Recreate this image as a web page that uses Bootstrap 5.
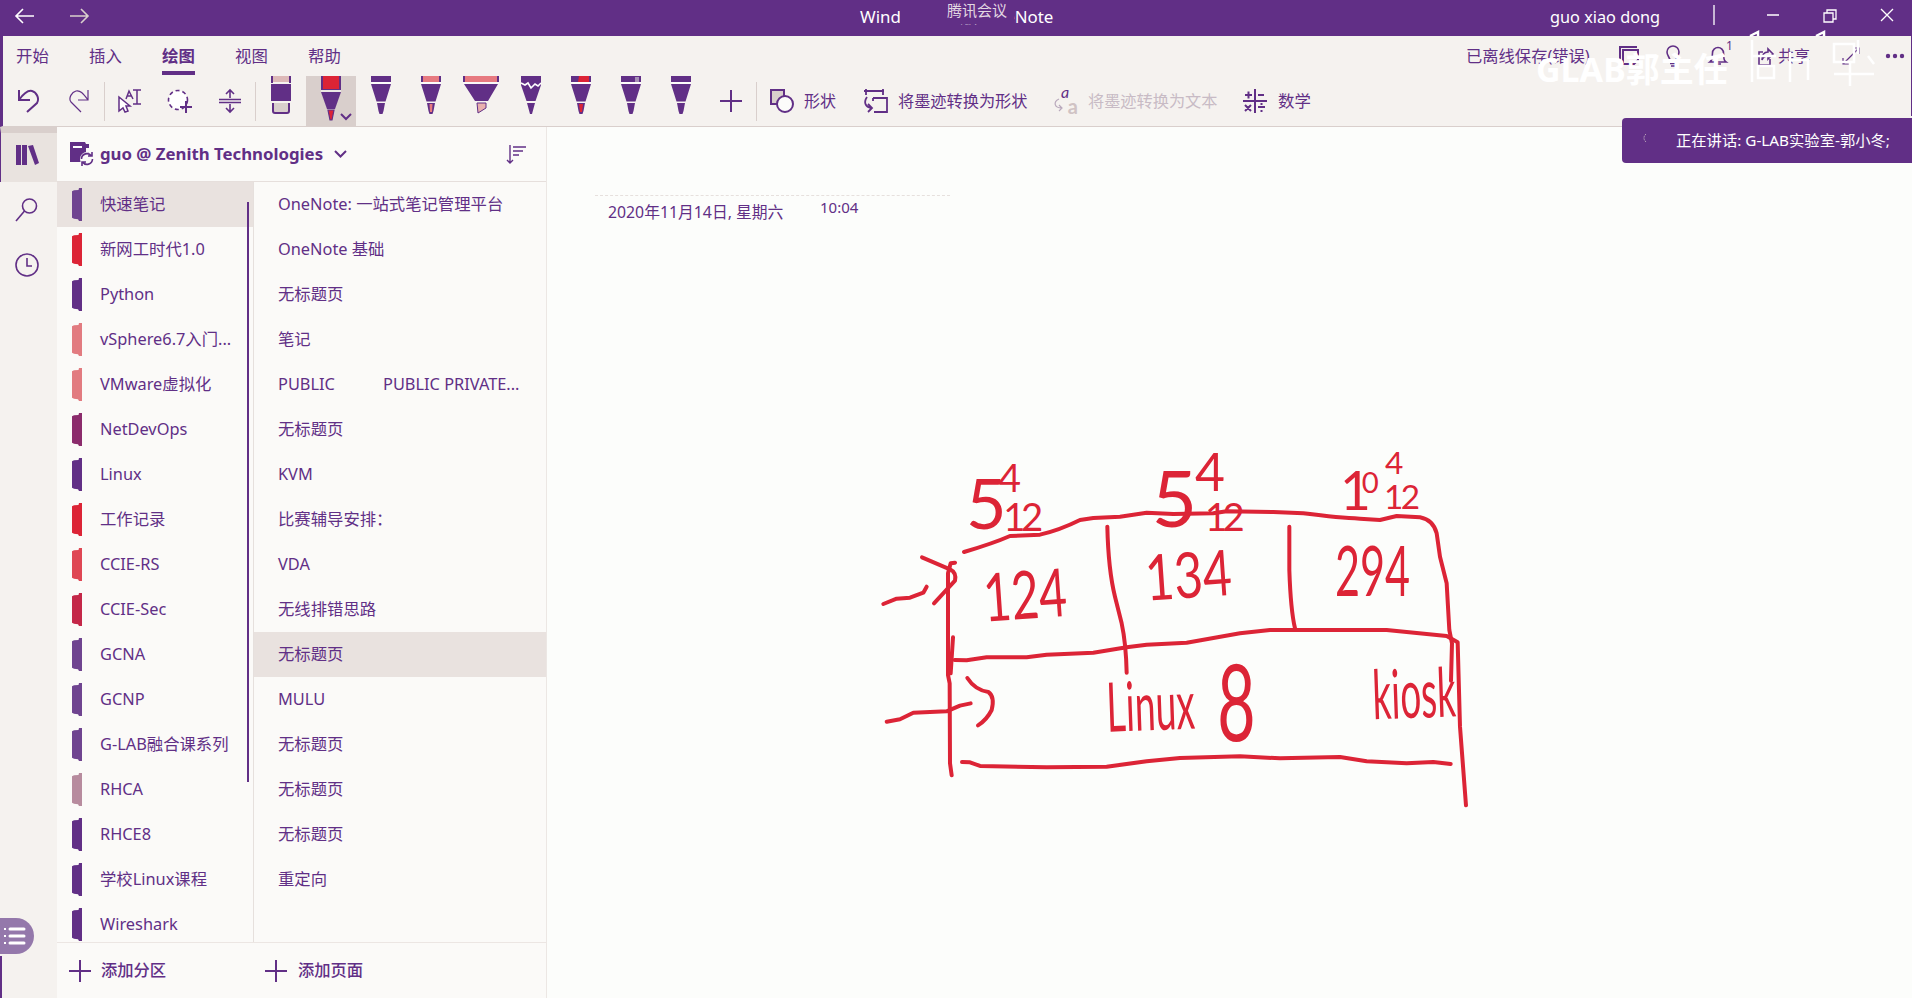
<!DOCTYPE html>
<html lang="zh-CN">
<head>
<meta charset="utf-8">
<title>OneNote</title>
<link href="https://cdn.jsdelivr.net/npm/bootstrap@5.3.0/dist/css/bootstrap.min.css" rel="stylesheet">
<script src="https://cdn.jsdelivr.net/npm/bootstrap@5.3.0/dist/js/bootstrap.bundle.min.js"></script>
<style>
:root{--pp:#612f86;--rd:#dc2436;--tan:#d9cfcc;--paper:#fcfdfb;--ribbon:#f5f2ef}
body{width:1912px;height:998px;overflow:hidden;background:var(--paper);color:var(--pp);font:16px/1 "Noto Sans","Noto Sans CJK SC",sans-serif}
svg{display:block;overflow:visible;flex:none}
.ln{fill:none;stroke:currentColor;stroke-width:1.6}
.fillp{fill:var(--pp)}
.titlebar{height:36px;background:var(--pp);color:#fff;padding-bottom:4px}
.ribbon{height:91px;background:var(--ribbon);border-bottom:1px solid var(--tan);border-left:3px solid var(--pp)}
.tabs{height:40px;padding-left:13px}
.tabs a{color:inherit;text-decoration:none;width:73px;padding-top:12px;height:39px;font-size:16.400px}
.tabs a.on{font-weight:700}
.tabs a.on span{display:inline-block;border-bottom:4px solid var(--pp);height:27px}
.tabs a span{display:block}
.tools{height:50px;padding-left:1px}
.tool{width:50px;height:50px;display:flex;align-items:center;justify-content:center;flex:none}
.pen{align-items:flex-start}
.tool.on{background:var(--tan)}
.vr1{width:1px;height:39px;background:var(--tan);align-self:center;margin-right:0}
.cmd{height:50px;display:flex;align-items:center}
.rail{width:57px;background:var(--ribbon)}
.rail .cell{height:55px;display:flex;align-items:center;justify-content:center;padding-right:3px}
.rail .books{background:#e9e3df;border-left:1px solid var(--pp);border-top:6px solid var(--tan);padding-bottom:4px}
.side{width:490px;min-height:0;background:#fbfaf8;border-right:1px solid #ece7e4}
.sidehead{height:55px;flex:none;border-bottom:1px solid #e6dfdc}
.lists{min-height:0;overflow:hidden;font-size:16.350px}
.sections{width:197px;border-right:1px solid #e6e0dd}
.row45{height:45px;display:flex;align-items:center;white-space:nowrap;padding-bottom:0}
.sections .row45{padding-left:15px}
.sections .row45::before{content:"";width:10px;height:33px;margin-right:18px;background:var(--c,var(--pp));clip-path:polygon(0 10%,20% 7%,65% 6%,70% 0,100% 0,100% 100%,70% 100%,60% 95%,20% 93%,0 90%)}
.pages .row45{padding-left:24px}
.sel{background:#e9e2df}
.foot{height:56px;flex:none;border-top:1px solid #ece6e3;font-weight:500;font-size:16.300px}
.bar{position:absolute;left:247px;top:202px;width:2px;height:580px;background:var(--pp)}
.toast0{position:absolute;left:1622px;top:118px;width:290px;height:45px;background:var(--pp);color:#fff;border-radius:4px 0 0 4px;font-size:15.3px}
.wm{position:absolute;left:1536px;top:52px;color:#fff;font-weight:700;font-size:34px;white-space:nowrap;line-height:34px}
.mask{position:absolute;left:40px;top:-10px;width:114px;height:25px;background:var(--pp);color:#e3d8e2;padding-left:47px;font-size:15px;line-height:22px}
.bubble{position:absolute;left:0;top:918px;width:34px;height:36px;border-radius:0 18px 18px 0;background:#9478ab}
.edge{position:absolute;background:var(--pp)}
.ink{position:absolute;left:0;top:0;pointer-events:none}
.ink path{fill:none;stroke:var(--rd);stroke-width:12;stroke-linecap:round;stroke-linejoin:round}
.ink text{fill:var(--rd);font-family:"Lato","Open Sans",sans-serif;font-weight:400}
.small1{position:absolute;font-size:12px}
</style>
</head>
<body class="position-relative d-flex flex-column">
<svg width="0" height="0" class="position-absolute"><defs>
<g id="pen"><path class="fillp" d="M0 0h20v6H0zM0 8h20l-5.500 17.500h-9zM6 27h8l-1.500 8 -1 3h-3l-1-3z"/><path d="M0 7h20" stroke="#fff" stroke-width="1.500"/></g>
</defs></svg>

<header class="titlebar d-flex align-items-center flex-shrink-0">
  <svg width="100" height="20" class="ln"><path d="M34 10H16M23 3l-7 7 7 7"/><path d="M70 10h18M81 3l7 7-7 7" stroke="#d9cfcc"/></svg>
  <div class="position-relative" style="margin-left:760px;width:193px;white-space:nowrap;font-size:16.900px;top:1px"><span>Windows 10 版 OneNote</span><div class="mask">腾讯会议</div></div>
  <div style="margin-left:497px;width:112px;white-space:nowrap;padding-top:2px;font-size:16.300px">guo xiao dong</div>
  <svg width="200" height="24" class="ln" style="margin-left:53px;stroke-width:1.300"><path d="M1 1v20M54 11h12M111 9h9v9h-9zM114 9V6h9v9h-3M168 5l12 12M180 5l-12 12"/></svg>
</header>

<div class="ribbon flex-shrink-0">
  <div class="tabs d-flex">
    <a href="#"><span>开始</span></a><a href="#"><span>插入</span></a><a href="#" class="on"><span>绘图</span></a><a href="#"><span>视图</span></a><a href="#"><span>帮助</span></a>
    <div class="d-flex ms-auto align-items-center" style="width:446px;height:40px">
      <span style="width:153px;white-space:nowrap;font-size:16.300px">已离线保存(错误)</span>
      <svg width="20" height="20" class="ln" style="stroke-width:2"><path d="M1 15V1h17M4 4h15v10l-4 4H4z"/></svg>
      <svg width="14" height="20" class="ln" style="margin-left:27px"><path d="M4 15c0-4-3-5-3-9a6 6 0 0 1 12 0c0 4-3 5-3 9zM4 17.500h6M5 20h4"/></svg>
      <svg width="22" height="22" class="ln" style="margin-left:29px"><path d="M1 17c3-2 2-5 2.500-9a5.500 5.500 0 0 1 11 0C15 12 14 15 17 17zM6 19h6"/></svg><span class="small1" style="left:1726px;top:40px">1</span>
      <svg width="16" height="20" class="ln" style="margin-left:27px"><path d="M5 6H1v13h11v-6M4 14c0-6 3-8 6-8V3l5 5-5 5v-3c-3 0-5 1-6 4z"/></svg>
      <span style="margin-left:4px;width:64px">共享</span>
      <svg width="18" height="18" class="ln" style="stroke-width:1.200"><path d="M1 17L17 1M11 1h6v6M1 11v6h6"/></svg>
      <svg width="20" height="6" style="margin-left:25px"><g class="fillp"><circle cx="3" cy="3" r="2.200"/><circle cx="10" cy="3" r="2.200"/><circle cx="17" cy="3" r="2.200"/></g></svg>
    </div>
  </div>
  <div class="tools d-flex">
    <div class="tool"><svg width="22" height="24" class="ln" style="stroke-width:2"><path d="M1 1v10h11M1 11C6 4 10 1 14 2s8 7 5 12L9 23"/></svg></div>
    <div class="tool"><svg width="20" height="24" class="ln" style="stroke-width:1.200"><path d="M19 1v10H9M19 11C14 4 11 1 7 2S-1 9 2 13l10 10"/></svg></div>
    <div class="vr1"></div>
    <div class="tool"><svg width="24" height="24" class="ln" style="stroke-width:1.500"><path d="M15 1h8M19 1v14M15 15h8M8 10l3-8 4 8M9 7h5"/><path d="M1 8v14l4-3 2 4 3-1-2-5h4z" fill="#fff"/></svg></div>
    <div class="tool"><svg width="24" height="24" class="ln" style="stroke-width:1.600"><circle cx="10" cy="11" r="9.500" fill="#fff" stroke-dasharray="4 3"/><path d="M18 12v12M12 18h12" stroke-width="2"/></svg></div>
    <div class="tool"><svg width="22" height="24" class="ln"><path d="M0 10.500h22M0 13.500h22M11 9V1M7 5l4-4 4 4M11 15v8M7 19l4 4 4-4"/></svg></div>
    <div class="vr1"></div>
    <div class="tool pen"><svg width="20" height="38"><path d="M1 0v7M19 0v7" stroke="#612f86" stroke-width="2"/><path d="M2 0h16v6H2z" fill="#ddb9b8"/><path class="fillp" d="M0 8h20v17H0z"/><path d="M2 27v8q0 2 2 2h12q2 0 2-2v-8" fill="#d9cfcc" stroke="#612f86" stroke-width="2"/></svg></div>
    <div class="tool pen on"><svg width="20" height="46"><path d="M0 0h20v14H0z" fill="#612f86"/><path d="M2 0h16v13H2z" fill="#dc2436"/><path class="fillp" d="M0 16h20l-6 17H6z"/><path d="M7 34h6l-2 10H9z" fill="#dc2436" stroke="#612f86" stroke-width="1.200"/><path d="M0 15h20" stroke="#fff"/><path d="M20 38l5 5 5-5" class="ln" style="stroke-width:2"/></svg></div>
    <div class="tool pen"><svg width="20" height="38"><use href="#pen"/></svg></div>
    <div class="tool pen"><svg width="20" height="38"><use href="#pen"/><path d="M2 0h16v6H2zM8.500 28h3l-.5 8H9z" fill="#e77a80"/></svg></div>
    <div class="tool pen"><svg width="36" height="38"><path class="fillp" d="M0 0h36v6H0zM1 8h34L25 25H12z"/><path d="M2 0h32v6H2z" fill="#e77a80"/><path d="M0 7h36" stroke="#fff"/><path d="M14 27h9v5l-8 5z" fill="#e9b0ae" stroke="#612f86"/></svg></div>
    <div class="tool pen"><svg width="20" height="38"><path class="fillp" d="M0 0h20v9L14.500 25h-9L0 9zM6 27h8l-3 11h-2z"/><path d="M0 7l4 2 3-2 3 5 4-4 3 2 3-3" fill="none" stroke="#fff" stroke-width="1.600"/></svg></div>
    <div class="tool pen"><svg width="20" height="38"><use href="#pen"/><path d="M8 0h10v6H7zM8 28h4l-1 8H9z" fill="#dc2436"/></svg></div>
    <div class="tool pen"><svg width="20" height="38"><use href="#pen"/><path d="M14 1h4v5h-4z" fill="#a68fb5"/></svg></div>
    <div class="tool pen"><svg width="20" height="38"><use href="#pen"/></svg></div>
    <div class="tool"><svg width="22" height="22" class="ln" style="stroke-width:2"><path d="M11 0v22M0 11h22"/></svg></div>
    <div class="vr1"></div>
    <div class="cmd">
      <svg width="23" height="24" class="ln" style="margin-left:13px;stroke-width:2"><path d="M1 1h13v14H1z" fill="#d9cfcc"/><circle cx="15" cy="15" r="8" fill="#fcfcfa"/></svg><span style="margin-left:11px;width:60px">形状</span>
      <svg width="24" height="24" class="ln" style="stroke-width:2"><path d="M2 0v6M19 0v6M0 2h20M9 9h14v14H10M9 9v3M3 8c-4 6-1 10 4 11M4 15l4 4-4 4" stroke-width="1.800"/></svg><span style="margin-left:10px;width:156px;font-size:16.200px">将墨迹转换为形状</span>
      <div class="position-relative" style="width:25px;height:26px;color:#b9a9bc;font-family:Lato"><i class="position-absolute" style="left:7px;top:-4px;color:#612f86;font-size:16px">a</i><b class="position-absolute" style="right:1px;top:8px;color:#d0c3c4;font-size:20px">a</b><svg class="ln position-absolute" width="12" height="14" style="top:10px"><path d="M5 1C-1 4 0 10 8 10M5 7l3 3-3 3" stroke-width="1.200"/></svg></div><span style="margin-left:9px;width:155px;color:#c8bbc5;font-size:16.200px">将墨迹转换为文本</span>
      <svg width="24" height="24" class="ln" style="stroke-width:2"><path d="M12 0v24M0 12h24M2 6h7M5.500 2.500v7M15 6h6M2 16l6 6M8 16l-6 6M15 18h7M18.500 14v2M18.500 21v2"/></svg><span style="margin-left:11px;font-size:16.400px">数学</span>
    </div>
  </div>
</div>

<div class="d-flex flex-grow-1" style="min-height:0">
  <nav class="rail">
    <div class="cell books"><svg width="24" height="21"><path class="fillp" d="M0 0h5v20H0zM6 0h5v20H6zM12 1l5-1 6 18-4 2z"/></svg></div>
    <div class="cell"><svg width="22" height="24" class="ln"><circle cx="13.500" cy="8" r="7"/><path d="M8.500 13L0 23"/></svg></div>
    <div class="cell"><svg width="24" height="24" class="ln"><circle cx="12" cy="12" r="11"/><path d="M12 5v8h5"/></svg></div>
  </nav>
  <aside class="side d-flex flex-column">
    <div class="sidehead d-flex align-items-center">
      <svg width="23" height="24" style="margin-left:13px"><path class="fillp" d="M0 0h15l1 2h3v4h-3v4h3v3l-8 1v6H0z"/><path d="M3 5h9" stroke="#fff" stroke-width="2"/><circle cx="17" cy="17" r="7" fill="#fbfaf8"/><path d="M11.500 17a5.500 5.500 0 0 1 10-3M22.500 17a5.500 5.500 0 0 1-10 3M22 10v4h-4M12 24v-4h4" class="ln"/></svg>
      <b style="margin-left:7px;width:235px;white-space:nowrap;font-size:16.800px">guo @ Zenith Technologies</b>
      <svg width="11" height="7" class="ln" style="stroke-width:2"><path d="M0 0l5.500 5.500L11 0"/></svg>
      <svg width="19" height="19" class="ln" style="margin-left:161px;stroke-width:1.400"><path d="M3 0v18M0 15l3 3 3-3M6 2h13M6 6h10M6 10h6"/></svg>
    </div>
    <div class="lists d-flex flex-grow-1">
      <div class="sections">
        <div class="row45 sel" style="--c:#6f4490">快速笔记</div><div class="row45" style="--c:#dc2436">新网工时代1.0</div><div class="row45">Python</div><div class="row45" style="--c:#e27b80">vSphere6.7入门...</div><div class="row45" style="--c:#e27b80">VMware虚拟化</div><div class="row45" style="--c:#8b2b6c">NetDevOps</div><div class="row45">Linux</div><div class="row45" style="--c:#dc2436">工作记录</div><div class="row45" style="--c:#df4754">CCIE-RS</div><div class="row45" style="--c:#c42748">CCIE-Sec</div><div class="row45" style="--c:#6f4490">GCNA</div><div class="row45" style="--c:#6f4490">GCNP</div><div class="row45" style="--c:#6f4490">G-LAB融合课系列</div><div class="row45" style="--c:#b78b9e">RHCA</div><div class="row45">RHCE8</div><div class="row45">学校Linux课程</div><div class="row45">Wireshark</div>
      </div>
      <div class="pages flex-grow-1">
        <div class="row45">OneNote: 一站式笔记管理平台</div><div class="row45">OneNote 基础</div><div class="row45">无标题页</div><div class="row45">笔记</div><div class="row45"><span style="width:105px">PUBLIC</span>PUBLIC PRIVATE...</div><div class="row45">无标题页</div><div class="row45">KVM</div><div class="row45">比赛辅导安排：</div><div class="row45">VDA</div><div class="row45">无线排错思路</div><div class="row45 sel">无标题页</div><div class="row45">MULU</div><div class="row45">无标题页</div><div class="row45">无标题页</div><div class="row45">无标题页</div><div class="row45">重定向</div>
      </div>
    </div>
    <div class="foot d-flex align-items-center">
      <svg width="22" height="22" class="ln" style="margin-left:12px;stroke-width:2"><path d="M11 0v22M0 11h22"/></svg><span style="margin-left:10px;width:164px">添加分区</span>
      <svg width="22" height="22" class="ln" style="stroke-width:2"><path d="M11 0v22M0 11h22"/></svg><span style="margin-left:11px">添加页面</span>
    </div>
  </aside>
  <main class="flex-grow-1">
    <div style="margin:68px 0 0 48px;width:355px;border-top:1px dashed #e6e0dd"></div>
    <div class="d-flex" style="margin:7px 0 0 61px"><span style="width:212px;padding-top:2px;font-size:15.800px">2020年11月14日, 星期六</span><span style="font-size:15px;margin-top:-3px">10:04</span></div>
  </main>
</div>

<svg class="ink" width="1912" height="998"><g transform="translate(860 430) scale(.33333)">
  <path d="M312 366Q400 340 450 318L540 314Q600 300 660 270L700 264L780 260L860 248L940 252L1060 250L1100 244L1240 246L1330 250Q1440 264 1500 266L1560 270L1610 258L1680 262Q1720 270 1730 310L1740 380L1760 460L1768 600L1776 640L1773 752"/>
  <path d="M285 398L272 400L264 430V735L269 760L270 1000L275 1036M279 622L272 730"/>
  <path d="M70 522L110 506L150 503L190 488L200 470M186 382L270 418Q290 428 285 452L222 520"/>
  <path d="M742 290Q745 420 765 500L785 580Q798 640 800 728M1288 290L1288 420Q1292 540 1305 595"/>
  <path d="M284 690L320 691L380 682L500 682L560 674L700 668L800 652L860 644L980 638L1140 610L1230 600L1580 600L1760 618L1793 637L1800 890L1818 1126"/>
  <path d="M306 996L330 997L360 1008L560 1012L740 1010L860 994L960 984L1140 979L1260 985L1440 981L1520 994L1640 1000L1720 996L1772 1002"/>
  <path d="M80 875L120 868L160 848L260 844L300 827L332 820M322 744Q345 780 385 786Q405 800 395 840Q380 870 354 886"/>
  <text font-size="200"><tspan x="318" y="297" font-size="210">5</tspan><tspan x="415" y="186" font-size="118">4</tspan><tspan x="430" y="303" font-size="115" dx="0 -14">12</tspan></text>
  <text><tspan x="875" y="292" font-size="235">5</tspan><tspan x="1005" y="184" font-size="155">4</tspan><tspan x="1035" y="303" font-size="115" dx="0 -14">12</tspan></text>
  <text><tspan x="1440" y="240" font-size="160">1</tspan><tspan x="1505" y="190" font-size="88">0</tspan><tspan x="1575" y="132" font-size="95">4</tspan><tspan x="1572" y="238" font-size="100" dx="0 -8">12</tspan></text>
  <text x="375" y="575" font-size="200" textLength="250" lengthAdjust="spacingAndGlyphs" transform="rotate(-4 375 575)">124</text>
  <text x="860" y="512" font-size="190" textLength="260" lengthAdjust="spacingAndGlyphs" transform="rotate(-4 860 512)">134</text>
  <text x="1425" y="498" font-size="210" textLength="225" lengthAdjust="spacingAndGlyphs">294</text>
  <text x="742" y="905" font-size="205" textLength="265" lengthAdjust="spacingAndGlyphs" transform="rotate(-2 742 905)">Linux</text>
  <text x="1072" y="932" font-size="320" textLength="115" lengthAdjust="spacingAndGlyphs">8</text>
  <text x="1540" y="868" font-size="205" textLength="250" lengthAdjust="spacingAndGlyphs" transform="rotate(-2 1540 868)">kiosk</text>
</g></svg>
<div class="bar"></div>
<div class="wm">GLAB郭主任</div>
<svg class="position-absolute" style="left:1750px;top:32px" width="130" height="54"><path d="M0 4l8-4v4M2 8v42M2 24h24M8 34h16v12H8zM40 20v30M40 28h18v20M66 4l8-4v4M84 12h20v18H84zM84 42h40M100 30v24M108 8v14M118 24l6 8" fill="none" stroke="#fff" stroke-width="2.500"/></svg>
<div class="toast0 d-flex align-items-center"><svg width="7" height="10" style="margin-left:20px;margin-top:-6px"><path d="M4 1Q0 5 4 9" fill="none" stroke="#d9cfcc" stroke-dasharray="1 1"/></svg><span style="margin-left:27px;white-space:nowrap">正在讲话: G-LAB实验室-郭小冬;</span></div>
<div class="bubble"><svg width="34" height="36"><path d="M10 11h14M10 18h14M10 25h14" stroke="#fff" stroke-width="3" stroke-linecap="round"/><path d="M4 11h2M4 18h2M4 25h2" stroke="#fff" stroke-width="2"/></svg></div>
<div class="edge" style="left:0;top:956px;width:2px;height:42px"></div>
<div class="edge" style="left:1911px;top:36px;width:1px;height:80px"></div>
</body>
</html>
